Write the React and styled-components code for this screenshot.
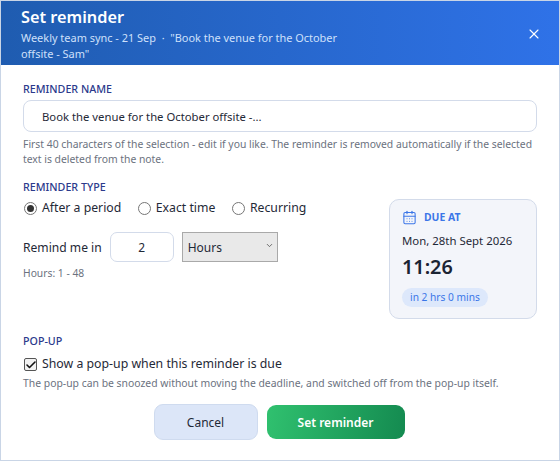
import { createGlobalStyle, styled } from "styled-components";
import { X, CalendarDays, ChevronDown, Check } from "lucide-react";

const GlobalStyle = createGlobalStyle`
  html, body { margin: 0; padding: 0; background: #fff; }
  * { box-sizing: border-box; }
  body { font-family: "Noto Sans", "Open Sans", sans-serif; color: #1f2937; }
`;

export default function App() {
  return (
    <Dialog>
      <GlobalStyle />
      <Header>
        <div>
          <Title>Set reminder</Title>
          <Subtitle>
            Weekly team sync - 21 Sep &nbsp;·&nbsp; "Book the venue for the October offsite - Sam"
          </Subtitle>
        </div>
        <CloseButton aria-label="Close">
          <X size={16} strokeWidth={1.6} />
        </CloseButton>
      </Header>
      <Body>
        <SectionLabel>REMINDER NAME</SectionLabel>
        <NameInput defaultValue="Book the venue for the October offsite -..." />
        <Hint>
          First 40 characters of the selection - edit if you like. The reminder is removed automatically if the selected text is deleted from the note.
        </Hint>

        <TypeLabel>REMINDER TYPE</TypeLabel>
        <TypeArea>
          <div>
            <RadioRow>
              <RadioLabel><RadioInput type="radio" name="type" defaultChecked />After a period</RadioLabel>
              <RadioLabel><RadioInput type="radio" name="type" />Exact time</RadioLabel>
              <RadioLabel><RadioInput type="radio" name="type" />Recurring</RadioLabel>
            </RadioRow>
            <RemindRow>
              <span>Remind me in</span>
              <NumberInput defaultValue="2" />
              <SelectBox>
                Hours
                <ChevronDown size={9} strokeWidth={2.2} />
              </SelectBox>
            </RemindRow>
            <RangeHint>Hours: 1 - 48</RangeHint>
          </div>
          <DueCard>
            <DueHead>
              <CalendarDays size={15} strokeWidth={1.7} />
              DUE AT
            </DueHead>
            <DueDate>Mon, 28th Sept 2026</DueDate>
            <DueTime>11:26</DueTime>
            <DuePill>in 2 hrs 0 mins</DuePill>
          </DueCard>
        </TypeArea>

        <PopupLabel>POP-UP</PopupLabel>
        <CheckLabel>
          <CheckBox><Check size={12} strokeWidth={3.2} /></CheckBox>
          Show a pop-up when this reminder is due
        </CheckLabel>
        <PopupHint>The pop-up can be snoozed without moving the deadline, and switched off from the pop-up itself.</PopupHint>

        <Actions>
          <CancelButton>Cancel</CancelButton>
          <SubmitButton>Set reminder</SubmitButton>
        </Actions>
      </Body>
    </Dialog>
  );
}

const Dialog = styled.div`
  width: 560px;
  height: 461px;
  display: flex;
  flex-direction: column;
  border: 1px solid #c9d5e6;
  background: #fff;
  overflow: hidden;
`;

const Header = styled.header`
  height: 64px;
  flex: none;
  display: flex;
  justify-content: space-between;
  align-items: center;
  padding: 2px 17px 0 20px;
  background: linear-gradient(90deg, #1f5cb0, #2f72e8);
  color: #fff;
`;

const Title = styled.h1`
  margin: 0;
  font-size: 16.3px;
  line-height: 22px;
  font-weight: 600;
`;

const Subtitle = styled.p`
  margin: 2px 0 0;
  width: 325px;
  font-size: 10.95px;
  line-height: 16px;
  color: #cfe0fb;
`;

const CloseButton = styled.button`
  display: flex;
  padding: 0;
  border: 0;
  background: none;
  color: #fff;
`;

const Body = styled.div`
  flex: 1;
  padding: 17px 22px 0;
`;

const SectionLabel = styled.div`
  font-size: 10.7px;
  line-height: 15px;
  font-weight: 500;
  color: #2b3a8c;
`;

const NameInput = styled.input`
  display: block;
  width: 100%;
  height: 32px;
  margin-top: 3px;
  padding: 0 18px;
  border: 1px solid #d3dbea;
  border-radius: 8px;
  outline: none;
  font: 11.3px "Noto Sans", sans-serif;
  color: #1f2937;
`;

const Hint = styled.p`
  margin: 5px 0 0;
  font-size: 10.37px;
  line-height: 15px;
  color: #6b7280;
`;

const TypeLabel = styled(SectionLabel)`
  margin-top: 13px;
`;

const TypeArea = styled.div`
  display: flex;
  justify-content: space-between;
  align-items: flex-start;
`;

const RadioRow = styled.div`
  display: flex;
  gap: 15.5px;
  margin-top: 4px;
`;

const RadioLabel = styled.label`
  display: flex;
  align-items: center;
  gap: 5px;
  font-size: 12.25px;
  line-height: 18px;
`;

const RadioInput = styled.input`
  appearance: none;
  width: 13px;
  height: 13px;
  margin: 0 0 0 1px;
  display: grid;
  place-items: center;
  border: 1px solid #767676;
  border-radius: 50%;
  background: #fff;

  &:checked::before {
    content: "";
    width: 7px;
    height: 7px;
    border-radius: 50%;
    background: #333;
  }
`;

const RemindRow = styled.div`
  display: flex;
  align-items: center;
  gap: 8px;
  margin-top: 15px;
  font-size: 12.1px;
`;

const NumberInput = styled.input`
  width: 64px;
  height: 30px;
  border: 1px solid #d3dbea;
  border-radius: 7px;
  outline: none;
  text-align: center;
  font: 12px "Noto Sans", sans-serif;
  color: #1f2937;
`;

const SelectBox = styled.div`
  width: 96px;
  height: 30px;
  display: flex;
  align-items: center;
  justify-content: space-between;
  padding: 0 3px 0 5px;
  background: #e9e9e9;
  border: 1px solid #a9a9a9;
  font-size: 12px;

  svg { margin-bottom: 4px; color: #555; }
`;

const RangeHint = styled.div`
  margin-top: 4px;
  font-size: 10.3px;
  line-height: 15px;
  color: #6b7280;
`;

const DueCard = styled.aside`
  width: 148px;
  height: 120px;
  margin-top: 4px;
  padding: 10px 12px;
  border: 1px solid #d3dbea;
  border-radius: 10px;
  background: #f3f5fa;
`;

const DueHead = styled.div`
  display: flex;
  align-items: center;
  gap: 7px;
  font-size: 10.4px;
  line-height: 15px;
  font-weight: 700;
  color: #3b76e8;
`;

const DueDate = styled.div`
  margin-top: 8px;
  font-size: 11.4px;
  line-height: 16px;
`;

const DueTime = styled.div`
  margin-top: 5px;
  font-size: 19.8px;
  line-height: 26px;
  font-weight: 600;
  color: #1b2433;
`;

const DuePill = styled.span`
  display: inline-block;
  margin-top: 8px;
  padding: 0 8px;
  border-radius: 10px;
  background: #dde8fb;
  font-size: 10.2px;
  line-height: 19px;
  color: #3b76e8;
`;

const PopupLabel = styled(SectionLabel)`
  margin-top: 15px;
`;

const CheckLabel = styled.label`
  display: flex;
  align-items: center;
  gap: 5px;
  margin-top: 6px;
  font-size: 12.3px;
  line-height: 18px;
`;

const CheckBox = styled.span`
  width: 13px;
  height: 13px;
  margin-left: 1px;
  display: grid;
  place-items: center;
  border: 1px solid #555;
  border-radius: 2px;
  background: #f2f2f2;
  color: #111;
`;

const PopupHint = styled.p`
  margin: 3px 0 0;
  font-size: 10.4px;
  line-height: 15px;
  color: #6b7280;
`;

const Actions = styled.div`
  display: flex;
  justify-content: center;
  align-items: center;
  gap: 9px;
  margin-top: 13px;
  padding-right: 2px;
`;

const CancelButton = styled.button`
  width: 104px;
  height: 36px;
  border: 1px solid #cfdbef;
  border-radius: 9px;
  background: #dce6f8;
  font: 12px "Noto Sans", sans-serif;
  color: #1f2937;
`;

const SubmitButton = styled.button`
  width: 138px;
  height: 34px;
  border: 0;
  border-radius: 9px;
  background: linear-gradient(100deg, #30c16f, #148a50);
  font: 600 12px "Noto Sans", sans-serif;
  color: #fff;
`;
